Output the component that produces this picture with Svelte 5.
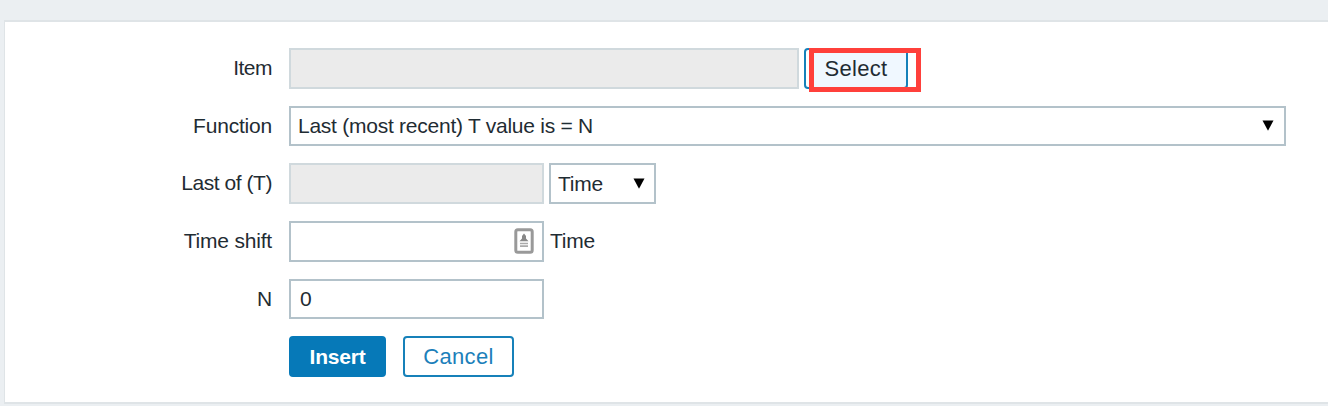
<script>
  let shift = $state('');
  let n = $state('0');
</script>

<main>
  <form class="panel" onsubmit={(e) => e.preventDefault()}>
    <div class="row">
      <span class="label item">Item</span>
      <div class="field disabled wide"></div>
      <div class="select-wrap">
        <button type="button" class="select-button">Select</button>
        <span class="highlight"></span>
      </div>
    </div>
    <div class="row">
      <span class="label">Function</span>
      <div class="field dropdown function">
        <span>Last (most recent) T value is = N</span>
        <svg width="12" height="11" viewBox="0 0 12 11"><path d="M.5.5h11L6 10.8z" /></svg>
      </div>
    </div>
    <div class="row">
      <span class="label last">Last of (T)</span>
      <div class="field disabled"></div>
      <div class="field dropdown unit">
        <span>Time</span>
        <svg width="12" height="11" viewBox="0 0 12 11"><path d="M.5.5h11L6 10.8z" /></svg>
      </div>
    </div>
    <div class="row">
      <span class="label">Time shift</span>
      <div class="field">
        <input aria-label="Time shift" bind:value={shift} />
        <svg class="contact" width="20" height="26" viewBox="0 0 20 26">
          <rect x="1.8" y="1.8" width="16.4" height="22.4" rx="2" fill="#fff" stroke="#999" stroke-width="3" />
          <path d="M10 5.5 12 8v2.5l2.5 2.7h-9L8 10.5V8z" fill="#888" />
          <path d="M6 15.5h8M6 18.2h8" stroke="#aaa" stroke-width="1.7" />
        </svg>
      </div>
      <span class="suffix">Time</span>
    </div>
    <div class="row">
      <span class="label">N</span>
      <div class="field"><input class="number" aria-label="N" bind:value={n} /></div>
    </div>
    <div class="row actions">
      <span class="label"></span>
      <button class="insert">Insert</button>
      <button type="button" class="cancel">Cancel</button>
    </div>
  </form>
</main>

<style>
  :global(body) { background: #fff; }
  * { box-sizing: border-box; }
  main {
    width: 1328px;
    height: 406px;
    padding: 20px 0 2px 4px;
    background: #ebeff2;
    font: 21px/24px "Liberation Sans", Arial, sans-serif;
    letter-spacing: -.2px;
    color: #1f2c33;
  }
  .panel {
    height: 384px;
    padding-top: 26px;
    border: 2px solid #dfe4e7;
    border-right: 0;
    border-left-width: 1px;
    background: #fff;
    display: flex;
    flex-direction: column;
    gap: 17.2px;
  }
  .row { display: flex; height: 40.5px; flex: none; }
  .label {
    width: 267px;
    margin-right: 17px;
    padding-top: 8px;
    text-align: right;
    white-space: nowrap;
  }
  .item { letter-spacing: -.5px; }
  .last { letter-spacing: -.45px; }
  .field {
    width: 255px;
    height: 40.5px;
    border: 2px solid #b3c2ca;
    background: #fff;
    display: flex;
    align-items: center;
    justify-content: space-between;
  }
  .disabled { background: #ebebeb; border-color: #d0d9dd; }
  .wide { width: 510px; }
  .function { width: 997px; }
  .unit { width: 107px; margin-left: 5px; }
  .dropdown { padding: 0 9px 0 7px; white-space: nowrap; }
  .function { padding-right: 10px; letter-spacing: -.25px; }
  .contact { margin-right: 8px; flex: none; }
  input {
    min-width: 0;
    width: 100%;
    padding: 0 9px;
    border: 0;
    outline: 0;
    background: none;
    font: inherit;
    color: inherit;
  }
  .suffix { padding: 8px 0 0 6px; }
  button {
    height: 41px;
    padding: 1px 0 0;
    border: 2px solid #1681b9;
    border-radius: 4px;
    background: #fff;
    font: 22px/36px "Liberation Sans", Arial, sans-serif;
    letter-spacing: .3px;
  }
  .select-wrap { position: relative; margin-left: 5px; }
  .select-button { width: 104px; background: #f0f8ff; color: #1f2c33; box-shadow: inset 3px 0 #fff; }
  .highlight {
    position: absolute;
    left: 5px;
    top: 0;
    width: 112px;
    height: 44px;
    border: 5px solid #ff403b;
    pointer-events: none;
  }
  .insert { width: 97px; background: #0679b8; border-color: #0679b8; color: #fff; font-size: 21px; font-weight: bold; letter-spacing: -.2px; }
  .cancel { width: 111px; margin-left: 17px; color: #1c80ba; }
</style>
